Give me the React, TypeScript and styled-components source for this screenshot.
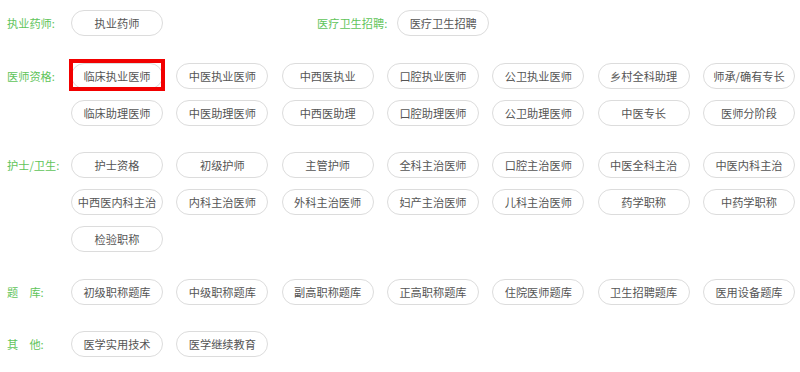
import styled, { createGlobalStyle } from 'styled-components';

const GlobalStyle = createGlobalStyle`
  body {
    margin: 0;
    background: #fff;
    font-family: 'Noto Sans CJK SC', 'Noto Sans', sans-serif;
  }
`;

export const Page = styled.div`
  width: 800px;
  padding-top: 10px;
  display: flex;
  flex-direction: column;
  gap: 26.5px;
`;

export const Section = styled.div`
  display: flex;
  align-items: flex-start;
  padding-left: 7px;
`;

export const Group = styled.div<{ $width?: number }>`
  display: flex;
  align-items: flex-start;
  width: ${(p) => (p.$width ? `${p.$width}px` : 'auto')};
`;

export const Label = styled.div<{ $fixed?: boolean }>`
  width: ${(p) => (p.$fixed ? '64px' : 'auto')};
  margin-right: ${(p) => (p.$fixed ? '0' : '10px')};
  flex-shrink: 0;
  height: 26px;
  line-height: 26px;
  font-size: 11.2px;
  color: #5fc45a;
  white-space: pre;
`;

export const TagList = styled.div`
  display: flex;
  flex-wrap: wrap;
  width: 724px;
  gap: 11px 13.33px;
`;

export const Tag = styled.div<{ $marked?: boolean }>`
  position: relative;
  box-sizing: border-box;
  width: 92px;
  height: 26px;
  border: 1px solid #dcdcdc;
  border-radius: 13px;
  background: #fff;
  color: #555;
  font-size: 11.2px;
  line-height: 24px;
  text-align: center;
  white-space: nowrap;

  &::after {
    content: '';
    display: ${(p) => (p.$marked ? 'block' : 'none')};
    position: absolute;
    top: -5px;
    bottom: -3px;
    left: -3px;
    right: -3px;
    border: 4px solid #f20000;
  }
`;

const sections = [
  {
    label: '医师资格:',
    tags: [
      '临床执业医师', '中医执业医师', '中西医执业', '口腔执业医师', '公卫执业医师', '乡村全科助理', '师承/确有专长',
      '临床助理医师', '中医助理医师', '中西医助理', '口腔助理医师', '公卫助理医师', '中医专长', '医师分阶段',
    ],
  },
  {
    label: '护士/卫生:',
    tags: [
      '护士资格', '初级护师', '主管护师', '全科主治医师', '口腔主治医师', '中医全科主治', '中医内科主治',
      '中西医内科主治', '内科主治医师', '外科主治医师', '妇产主治医师', '儿科主治医师', '药学职称', '中药学职称',
      '检验职称',
    ],
  },
  {
    label: '题　库:',
    tags: ['初级职称题库', '中级职称题库', '副高职称题库', '正高职称题库', '住院医师题库', '卫生招聘题库', '医用设备题库'],
  },
  {
    label: '其　他:',
    tags: ['医学实用技术', '医学继续教育'],
  },
];

export default function App() {
  return (
    <>
      <GlobalStyle />
      <Page>
        <Section>
          <Group $width={310}>
            <Label $fixed>执业药师:</Label>
            <Tag>执业药师</Tag>
          </Group>
          <Group>
            <Label>医疗卫生招聘:</Label>
            <Tag>医疗卫生招聘</Tag>
          </Group>
        </Section>
        {sections.map((s) => (
          <Section key={s.label}>
            <Label $fixed>{s.label}</Label>
            <TagList>
              {s.tags.map((t) => (
                <Tag key={t} $marked={t === '临床执业医师'}>
                  {t}
                </Tag>
              ))}
            </TagList>
          </Section>
        ))}
      </Page>
    </>
  );
}
